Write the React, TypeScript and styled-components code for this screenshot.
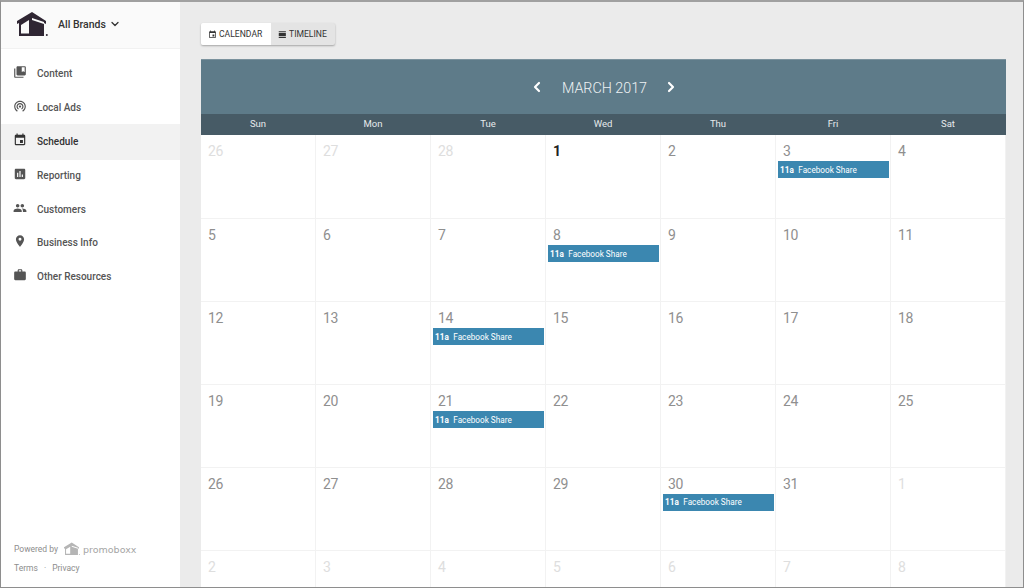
import React from "react";
import styled, { createGlobalStyle } from "styled-components";
import { ChevronDown, ChevronLeft, ChevronRight } from "lucide-react";
import { MdCollectionsBookmark, MdWifiTethering, MdEvent, MdAssessment, MdPeople, MdPlace, MdWork, MdViewDay } from "react-icons/md";

const Global = createGlobalStyle`
  html, body { margin: 0; padding: 0; height: 588px; overflow: hidden; background: #ebebeb; }
  * { box-sizing: border-box; }
  body { font-family: Roboto, "Liberation Sans", sans-serif; }
`;

const Frame = styled.div`
  width: 1024px; height: 588px; display: flex; overflow: hidden;
  border: 1px solid #8e8e8e; border-top-width: 2px; border-top-color: #a0a0a0;
  background: #ebebeb;
`;
const Sidebar = styled.aside`
  width: 179px; flex: none; background: #fff; display: flex; flex-direction: column;
`;
const BrandBar = styled.div`
  height: 47px; flex: none; background: #fafafa; border-bottom: 1px solid #f1f1f1;
  display: flex; align-items: center; padding-left: 16px; padding-bottom: 2px;
`;
const BrandName = styled.span`
  font-size: 10.5px; font-weight: 500; color: #333; margin-left: 10px;
`;
const BrandCaret = styled(ChevronDown)`
  width: 12px; height: 12px; margin-left: 3px; color: #333; stroke-width: 2.6;
`;
const Nav = styled.nav`
  display: flex; flex-direction: column; padding-top: 8px;
`;
const NavItem = styled.a<{ $active?: boolean }>`
  height: ${(p) => (p.$active ? "35.9px" : "33.9px")};
  margin: ${(p) => (p.$active ? "-1px 0" : "0")};
  display: flex; align-items: center; padding: 0 0 1px 12px; gap: 10px;
  background: ${(p) => (p.$active ? "#f2f2f2" : "transparent")};
  color: ${(p) => (p.$active ? "#333" : "#555")}; font-size: 10px; font-weight: 500;
  svg { width: 14px; height: 14px; flex: none; margin-top: -3px; }
`;
const Footer = styled.div`
  margin-top: auto; padding: 0 0 14px 13px; color: #8d8d8d; font-size: 8.5px;
  display: flex; flex-direction: column; gap: 7px;
`;
const PoweredRow = styled.div`
  display: flex; align-items: center; gap: 6px; height: 14px;
`;
const BoxLogoName = styled.span`
  font-family: "DejaVu Sans", sans-serif; font-size: 9.5px; color: #a5a5a5; margin-left: -3px;
`;
const Links = styled.div`
  display: flex; gap: 6px;
`;
const Main = styled.main`
  flex: 1; min-width: 0; padding: 21px 17px 0 21px; display: flex; flex-direction: column;
`;
const Toggle = styled.div`
  display: flex; flex: none; align-self: flex-start; height: 22px; box-shadow: 0 1px 2px rgba(0,0,0,.3); border-radius: 2px;
  background: #e4e4e4;
`;
const ToggleButton = styled.button<{ $active?: boolean }>`
  border: 0; padding: 0 0 0 7px; display: flex; align-items: center; gap: 2px;
  background: ${(p) => (p.$active ? "#fff" : "transparent")};
  font: 400 8.6px Roboto, sans-serif; color: #333;
  width: ${(p) => (p.$active ? "70px" : "64px")};
  border-radius: 2px 0 0 2px;
  svg { width: 9px; height: 9px; flex: none; }
`;
const Calendar = styled.section`
  margin-top: 14px; display: flex; flex-direction: column; flex: none;
`;
const MonthBar = styled.div`
  height: 55px; flex: none; background: #5e7b89; border-top: 1px solid #7b929d; display: flex; align-items: center; justify-content: center; color: #fff;
  gap: 14px;
  svg { width: 16px; height: 16px; stroke-width: 3.2; }
`;
const MonthTitle = styled.h2`
  margin: 0; padding: 1px 0 0 2px; font-size: 14.3px; font-weight: 300; color: #eef2f4; width: 90px; text-align: center; white-space: nowrap;
`;
const Weekdays = styled.div`
  height: 21px; flex: none; background: #475b66; display: grid; grid-template-columns: repeat(7, 1fr);
`;
const Weekday = styled.div`
  font-size: 9.5px; font-weight: 400; color: #e6eaec; display: flex; align-items: center; justify-content: center; padding: 0 1px 2px 0;
`;
const Grid = styled.div`
  display: grid; grid-template-columns: repeat(7, 1fr); grid-template-rows: 84px 83px 83px 82.5px 83px 83px; background: #fff;
`;
const Cell = styled.div`
  border-right: 1px solid #f2f2f2; border-bottom: 1px solid #f2f2f2; padding: 8px 1px 0 1px; background: #fff;
`;
const DayNum = styled.div<{ $tone: "muted" | "normal" | "today" }>`
  font-size: 14px; line-height: 17px; padding-left: 6px; margin-bottom: 1px; letter-spacing: -.4px;
  font-weight: ${(p) => (p.$tone === "today" ? 700 : 400)};
  color: ${(p) => (p.$tone === "muted" ? "#dedede" : p.$tone === "today" ? "#222" : "#8f8f8f")};
`;
const EventBar = styled.div`
  height: 17px; margin-left: 1px; background: #3b87b0; color: #fff; font-size: 8.2px; display: flex; align-items: center; padding-left: 2px; gap: 4.5px; white-space: nowrap;
  b { font-weight: 700; }
`;

const LogoMark = ({ width, height, color, cut }: { width: number; height: number; color: string; cut: string }) => (
  <svg width={width} height={height} viewBox="0 0 31 25" aria-hidden>
    <path fill={color} d="M0 9 L15 0 L29 9 L29 12 L27 11 L27 24 L2 24 L2 11 L0 12 Z" />
    <path fill={cut} d="M4 13 L12 8 L12 21.5 L4 21.5 Z" />
    <path fill={cut} d="M15 6 L27 10 L27 12 L15 8 Z" />
    <circle cx="29.8" cy="23" r="1" fill={color} />
  </svg>
);

const days: [number, "muted" | "normal" | "today"][] = [
  [26,"muted"],[27,"muted"],[28,"muted"],[1,"today"],[2,"normal"],[3,"normal"],[4,"normal"],
  [5,"normal"],[6,"normal"],[7,"normal"],[8,"normal"],[9,"normal"],[10,"normal"],[11,"normal"],
  [12,"normal"],[13,"normal"],[14,"normal"],[15,"normal"],[16,"normal"],[17,"normal"],[18,"normal"],
  [19,"normal"],[20,"normal"],[21,"normal"],[22,"normal"],[23,"normal"],[24,"normal"],[25,"normal"],
  [26,"normal"],[27,"normal"],[28,"normal"],[29,"normal"],[30,"normal"],[31,"normal"],[1,"muted"],
  [2,"muted"],[3,"muted"],[4,"muted"],[5,"muted"],[6,"muted"],[7,"muted"],[8,"muted"],
];
const eventIdx = new Set([5, 10, 16, 23, 32]);
const nav = [
  { label: "Content", Icon: MdCollectionsBookmark },
  { label: "Local Ads", Icon: MdWifiTethering },
  { label: "Schedule", Icon: MdEvent, active: true },
  { label: "Reporting", Icon: MdAssessment },
  { label: "Customers", Icon: MdPeople },
  { label: "Business Info", Icon: MdPlace },
  { label: "Other Resources", Icon: MdWork },
];

export default function App() {
  return (
    <>
      <Global />
      <Frame>
        <Sidebar>
          <BrandBar>
            <LogoMark width={31} height={25} color="#2f2633" cut="#fafafa" />
            <BrandName>All Brands</BrandName>
            <BrandCaret />
          </BrandBar>
          <Nav>
            {nav.map(({ label, Icon, active }) => (
              <NavItem key={label} $active={active}>
                <Icon />
                <span>{label}</span>
              </NavItem>
            ))}
          </Nav>
          <Footer>
            <PoweredRow>
              <span>Powered by</span>
              <LogoMark width={16} height={14} color="#b5b5b5" cut="#fff" />
              <BoxLogoName>promoboxx</BoxLogoName>
            </PoweredRow>
            <Links>
              <span>Terms</span><span>·</span><span>Privacy</span>
            </Links>
          </Footer>
        </Sidebar>
        <Main>
          <Toggle>
            <ToggleButton $active><MdEvent /> CALENDAR</ToggleButton>
            <ToggleButton><MdViewDay /> TIMELINE</ToggleButton>
          </Toggle>
          <Calendar>
            <MonthBar>
              <ChevronLeft />
              <MonthTitle>MARCH 2017</MonthTitle>
              <ChevronRight />
            </MonthBar>
            <Weekdays>
              {["Sun","Mon","Tue","Wed","Thu","Fri","Sat"].map((d) => <Weekday key={d}>{d}</Weekday>)}
            </Weekdays>
            <Grid>
              {days.map(([n, tone], i) => (
                <Cell key={i}>
                  <DayNum $tone={tone}>{n}</DayNum>
                  {eventIdx.has(i) && <EventBar><b>11a</b> Facebook Share</EventBar>}
                </Cell>
              ))}
            </Grid>
          </Calendar>
        </Main>
      </Frame>
    </>
  );
}
